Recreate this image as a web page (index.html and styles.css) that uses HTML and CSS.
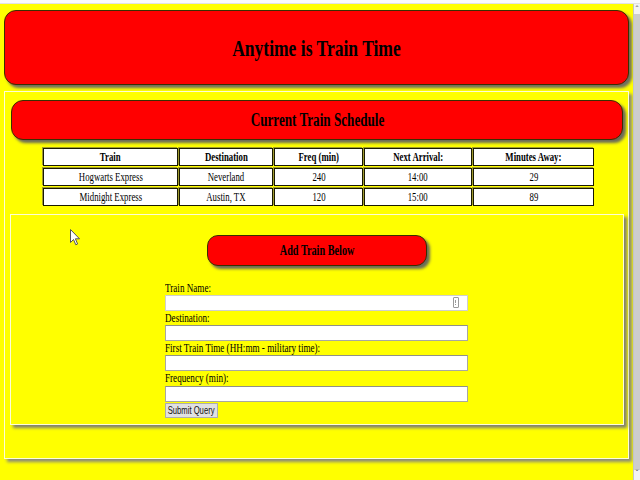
FILE: index.html
```html
<!DOCTYPE html>
<html>
<head>
<meta charset="utf-8">
<title>Train Scheduler</title>
<link rel="stylesheet" href="styles.css">
</head>
<body>
<div class="topbar"></div>
<div class="frame">
  <div class="page">
    <header class="jumbo"><h1 class="title"><span class="sq">Anytime is Train Time</span></h1></header>
    <section class="panel">
      <div class="banner"><h2 class="banner-text"><span class="sq">Current Train Schedule</span></h2></div>
      <table class="schedule">
        <colgroup>
          <col class="c1"><col class="c2"><col class="c3"><col class="c4"><col class="c5">
        </colgroup>
        <thead>
          <tr><th><span class="sq">Train</span></th><th><span class="sq">Destination</span></th><th><span class="sq">Freq (min)</span></th><th><span class="sq">Next Arrival:</span></th><th><span class="sq">Minutes Away:</span></th></tr>
        </thead>
        <tbody>
          <tr><td><span class="sq">Hogwarts Express</span></td><td><span class="sq">Neverland</span></td><td><span class="sq">240</span></td><td><span class="sq">14:00</span></td><td><span class="sq">29</span></td></tr>
          <tr><td><span class="sq">Midnight Express</span></td><td><span class="sq">Austin, TX</span></td><td><span class="sq">120</span></td><td><span class="sq">15:00</span></td><td><span class="sq">89</span></td></tr>
        </tbody>
      </table>
      <div class="form-panel">
        <div class="pill"><h3 class="pill-text"><span class="sq">Add Train Below</span></h3></div>
        <form class="train-form">
          <label class="lbl"><span class="sq sq-left">Train Name:</span></label>
          <div class="field field-first"><span class="kbd-icon"></span></div>
          <label class="lbl"><span class="sq sq-left">Destination:</span></label>
          <div class="field"></div>
          <label class="lbl"><span class="sq sq-left">First Train Time (HH:mm - military time):</span></label>
          <div class="field"></div>
          <label class="lbl"><span class="sq sq-left">Frequency (min):</span></label>
          <div class="field"></div>
          <div class="submit"><span class="sq">Submit Query</span></div>
        </form>
      </div>
    </section>
  </div>
  <div class="scrollbar">
    <span class="arrow">&#710;</span>
    <div class="thumb"></div>
    <span class="arrow arrow-down">&#711;</span>
  </div>
</div>
<svg class="cursor" width="11" height="17" viewBox="0 0 11 17">
  <path d="M0.5 0.5 L0.5 13.5 L3.5 10.5 L5.8 15.8 L7.6 15 L5.4 9.8 L9.5 9.8 Z" fill="#fff" stroke="#555" stroke-width="1"/>
</svg>
</body>
</html>
```
FILE: styles.css
```css
html, body {
  margin: 0;
  padding: 0;
  overflow: hidden;
}
body {
  background: #ffff00;
  font-family: "Liberation Serif", "Times New Roman", serif;
  color: #000;
  width: 640px;
  height: 480px;
  position: relative;
}
.topbar {
  height: 3px;
  background: #fafafa;
  border-bottom: 1px solid #e2e2e2;
}
.frame {
  display: flex;
  height: 476px;
}
.page {
  width: 626px;
  padding: 0 4px;
}
.sq {
  display: inline-block;
  transform: scaleX(0.73);
  white-space: nowrap;
}
.sq-left {
  transform-origin: left center;
}
.jumbo {
  margin-top: 6px;
  height: 75px;
  box-sizing: border-box;
  background: #ff0000;
  border: 1px solid #3a3000;
  border-radius: 12px;
  box-shadow: 3px 3px 3px #6e6e60;
  display: flex;
  align-items: center;
  justify-content: center;
}
.title {
  margin: 0;
  font-size: 24px;
  font-weight: bold;
  line-height: 1;
}
.panel {
  margin-top: 6px;
  border: 1px solid #fdfdd8;
  padding: 8px 0 33px;
  box-shadow: 3px 3px 3px #8a8a7a;
}
.banner {
  margin: 0 5px 0 6px;
  height: 40px;
  box-sizing: border-box;
  background: #ff0000;
  border: 1px solid #3a3000;
  border-radius: 12px;
  box-shadow: 3px 3px 3px #6a6a5a;
  display: flex;
  align-items: center;
  justify-content: center;
}
.banner-text {
  margin: 0;
  font-size: 18px;
  font-weight: bold;
  line-height: 1;
}
.schedule {
  margin: 6px 0 0 37px;
  table-layout: fixed;
  width: 553px;
  border-collapse: separate;
  border-spacing: 1px 2px;
  font-size: 12px;
}
.c1 { width: 135px; }
.c2 { width: 94px; }
.c3 { width: 89px; }
.c4 { width: 108px; }
.c5 { width: 121px; }
.schedule th, .schedule td {
  height: 18px;
  box-sizing: border-box;
  padding: 0;
  background: #fff;
  border: 1px solid #1a1a00;
  box-shadow: -1px -1px 0 #a09a30;
  text-align: center;
  line-height: 14px;
  overflow: visible;
}
.schedule th {
  font-weight: bold;
}
.form-panel {
  margin: 6px 4px 0 5px;
  border: 1px solid #fdfdd8;
  padding: 20px 0 6px;
  box-shadow: 3px 3px 3px #808070;
}
.pill {
  width: 220px;
  height: 31px;
  box-sizing: border-box;
  margin: 0 auto;
  background: #ff0000;
  border: 1px solid #3a3000;
  border-radius: 11px;
  box-shadow: 3px 3px 3px #6a6a5a;
  display: flex;
  align-items: center;
  justify-content: center;
}
.pill-text {
  margin: 0;
  font-size: 14px;
  font-weight: bold;
  line-height: 1;
}
.train-form {
  width: 303px;
  margin: 15px auto 0;
  transform: translateX(-1px);
}
.lbl {
  display: block;
  font-size: 12.5px;
  line-height: 14px;
  height: 14px;
}
.lbl:nth-of-type(4) {
  height: 15px;
}
.field {
  height: 16px;
  box-sizing: border-box;
  background: #fff;
  border: 1px solid #a8a8a0;
  border-top-color: #909088;
  position: relative;
}
.field-first {
  border-color: #cfcfcf;
}
.kbd-icon {
  position: absolute;
  right: 8px;
  top: 1px;
  width: 4px;
  height: 9px;
  border: 1px solid #9a9a9a;
  border-radius: 1px;
  background: linear-gradient(#9a9a9a, #9a9a9a) center 2px / 1px 3px no-repeat,
              linear-gradient(#9a9a9a, #9a9a9a) center 6px / 1px 1px no-repeat;
}
.submit {
  margin-top: 1px;
  width: 53px;
  height: 15px;
  box-sizing: border-box;
  background: #e1e1e1;
  border: 1px solid #adadad;
  font-family: "Liberation Sans", Arial, sans-serif;
  font-size: 10.5px;
  line-height: 13px;
  display: flex;
  justify-content: center;
  color: #111;
}
.scrollbar {
  width: 6px;
  border-left: 1px solid #c4c4c4;
  background: #f3f3f3;
  display: flex;
  flex-direction: column;
  align-items: center;
  font-family: "DejaVu Sans", sans-serif;
  font-size: 9px;
  color: #555;
  overflow: hidden;
}
.arrow {
  height: 8px;
  line-height: 12px;
}
.thumb {
  flex: 1;
  width: 6px;
  background: #cdcdcd;
  margin: 2px 0;
}
.arrow-down {
  line-height: 4px;
}
.cursor {
  position: absolute;
  left: 70px;
  top: 229px;
}
```
